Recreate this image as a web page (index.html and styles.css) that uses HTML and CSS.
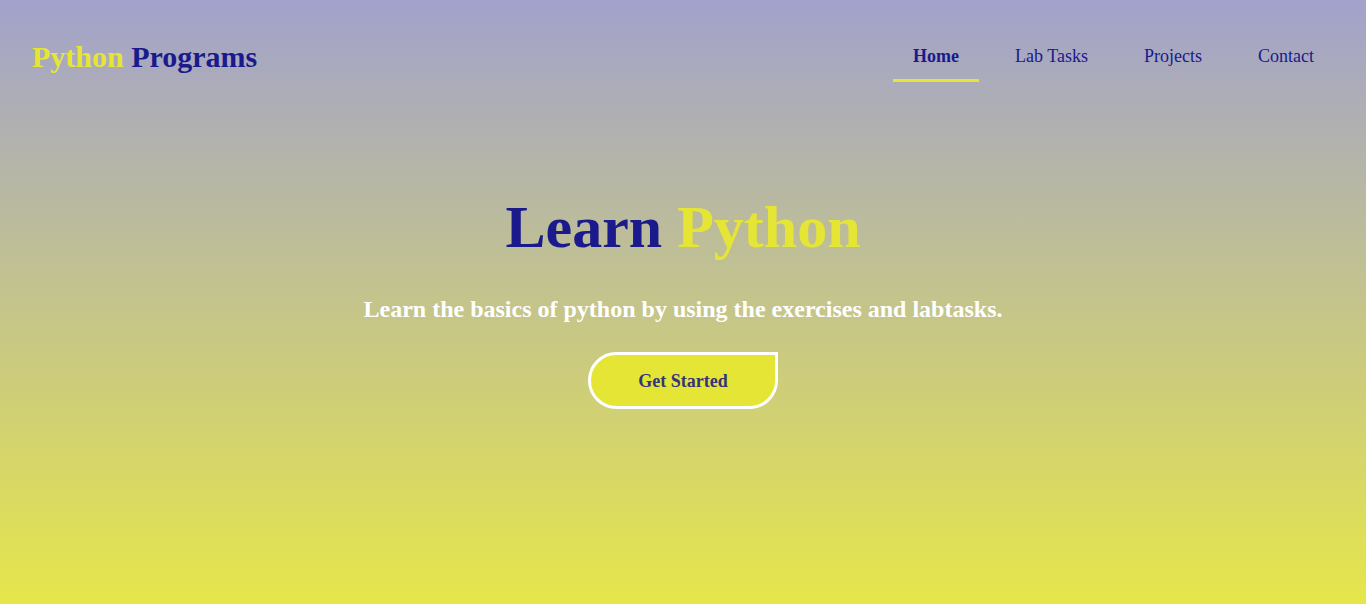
FILE: index.html
```html
<!DOCTYPE html>
<html lang="en">
<head>
<meta charset="utf-8">
<title>Python Programs</title>
<link rel="stylesheet" href="styles.css">
</head>
<body>
<div class="page">
  <header class="header">
    <div class="logo"><span class="yellow">Python</span> <span class="navy">Programs</span></div>
    <nav class="nav">
      <a class="nav-link active" href="#">Home</a>
      <a class="nav-link" href="#">Lab Tasks</a>
      <a class="nav-link" href="#">Projects</a>
      <a class="nav-link" href="#">Contact</a>
    </nav>
  </header>
  <main class="hero">
    <h1 class="title"><span class="navy">Learn</span> <span class="yellow">Python</span></h1>
    <p class="subtitle">Learn the basics of python by using the exercises and labtasks.</p>
    <a class="btn" href="#">Get Started</a>
  </main>
</div>
</body>
</html>
```
FILE: styles.css
```css
html, body {
  margin: 0;
  padding: 0;
  height: 100%;
}
body {
  font-family: "Liberation Serif", "Times New Roman", serif;
  background: linear-gradient(to bottom, #a2a2cc 0%, #e6e64b 100%);
  min-height: 604px;
}
.page {
  height: 604px;
  display: flex;
  flex-direction: column;
}
.yellow { color: #e5e535; }
.navy { color: #1a1a8c; }
.header {
  display: flex;
  justify-content: space-between;
  align-items: center;
  padding: 0 32px;
  height: 114px;
}
.logo {
  font-size: 30px;
  font-weight: bold;
}
.nav {
  display: flex;
  gap: 16px;
  align-self: flex-start;
  padding-top: 46px;
}
.nav-link {
  color: #1a1a8c;
  text-decoration: none;
  font-size: 18px;
  padding: 0 20px 12px;
  border-bottom: 3px solid transparent;
}
.nav-link.active {
  font-weight: bold;
  border-bottom-color: #e5e535;
}
.hero {
  display: flex;
  flex-direction: column;
  align-items: center;
  padding-top: 83px;
}
.title {
  margin: 0;
  font-size: 60px;
  font-weight: bold;
  line-height: 1;
}
.subtitle {
  margin: 39px 0 0;
  font-size: 24px;
  font-weight: bold;
  color: #ffffff;
}
.btn {
  margin-top: 29px;
  display: flex;
  align-items: center;
  justify-content: center;
  box-sizing: border-box;
  width: 190px;
  height: 57px;
  padding-top: 2px;
  background: #e5e535;
  border: 3px solid #ffffff;
  border-radius: 30px 0 30px 30px;
  color: #35357a;
  font-size: 18px;
  font-weight: bold;
  text-decoration: none;
}
```
